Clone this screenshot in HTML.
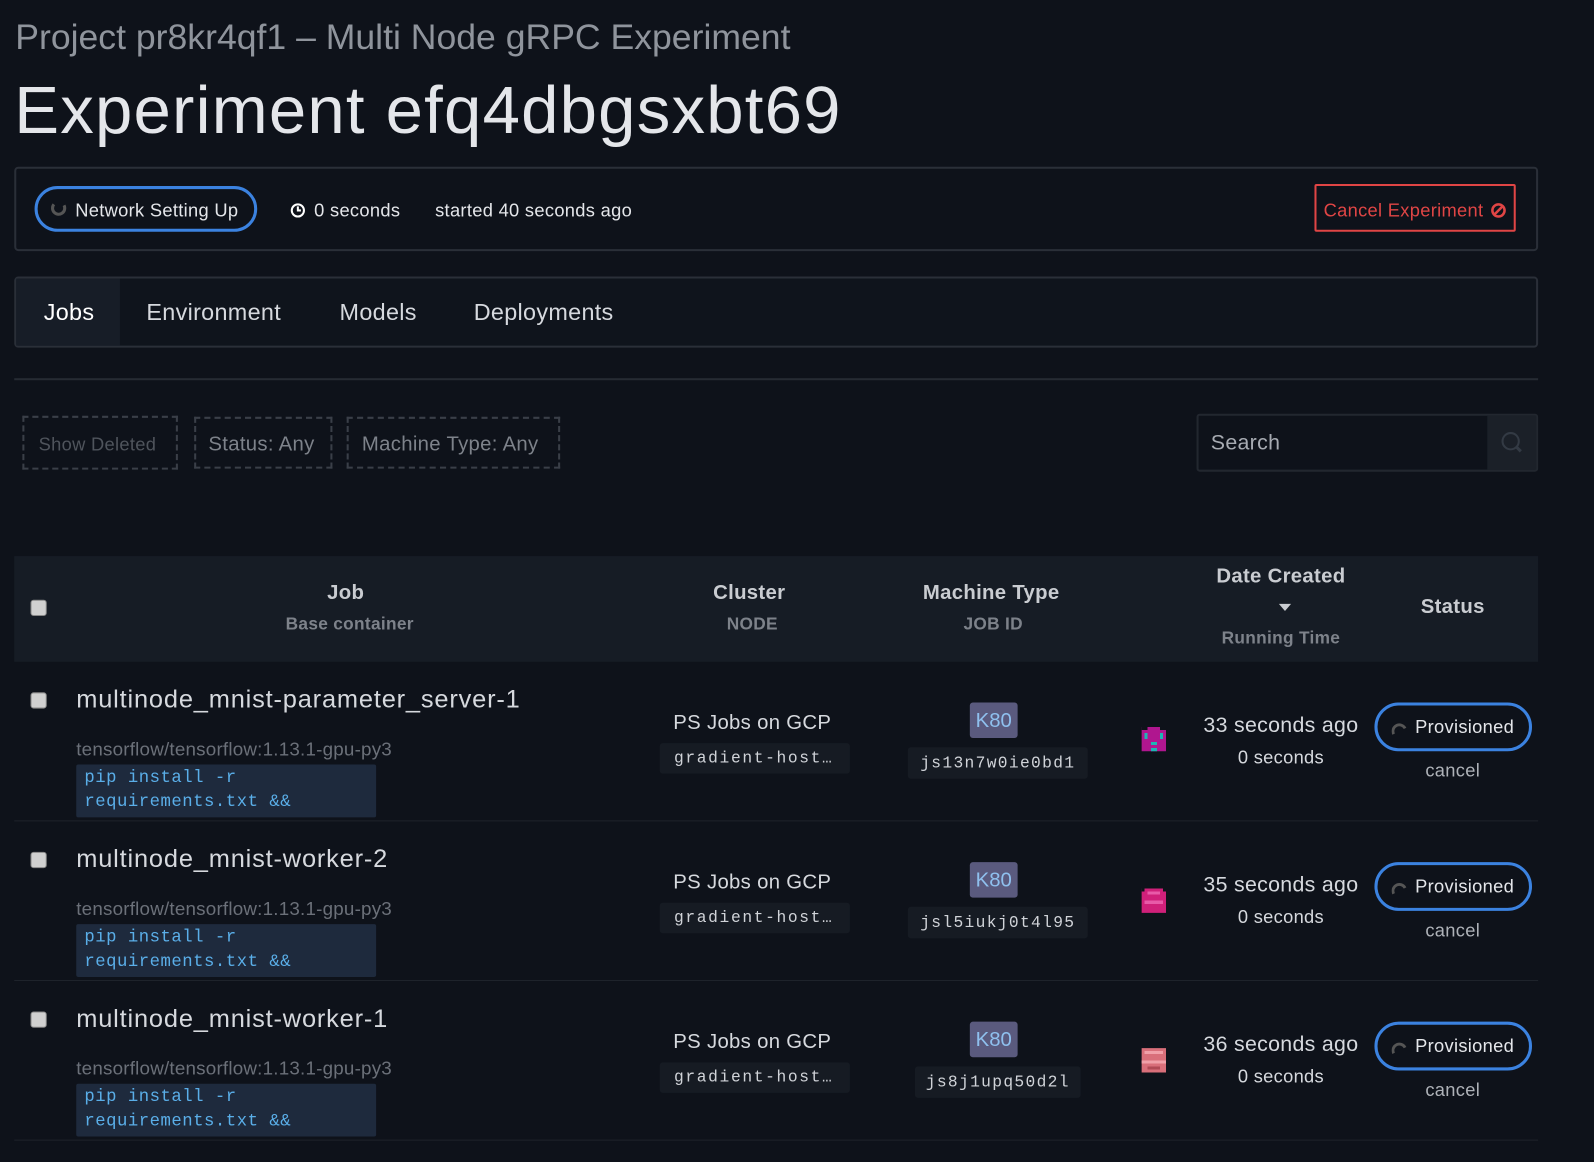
<!DOCTYPE html>
<html><head><meta charset="utf-8"><style>
*{box-sizing:border-box;margin:0;padding:0}
html,body{width:1594px;height:1162px;background:#0e121a;overflow:hidden}
#w{position:absolute;left:0;top:0;width:1568px;height:1143px;transform:scale(1.0166);transform-origin:0 0;font-family:"Liberation Sans",sans-serif;color:#d6d9de;letter-spacing:0.3px}
.a{position:absolute;white-space:nowrap}
.mono{font-family:"Liberation Mono",monospace;letter-spacing:0}
.pill{border:3px solid #3b82e0;border-radius:24px}
.cb{width:16px;height:16px;background:#d0d0d0;border-radius:3px;border:1px solid #888}
.c{text-align:center}
.row{position:absolute;left:0;width:1568px;height:158px}
.name{left:75px;top:23px;font-size:25px;color:#d6d9de;letter-spacing:0.8px}
.img{left:75px;top:75px;font-size:18.5px;color:#6b7079;letter-spacing:0.2px}
.code{left:75px;top:101px;width:295px;height:52px;background:#1e2a3d;border-radius:2px;color:#5aaee8;font-size:17px;line-height:24px;padding:2px 0 0 8px;white-space:pre;overflow:hidden;letter-spacing:0.5px}
.cl{left:640px;top:49px;width:200px;font-size:20px;color:#d6d9de}
.node{left:649px;top:80px;width:187px;height:30px;background:#161b23;border-radius:3px;font-size:16px;color:#d0d3d8;padding:6px 0 0 14px;letter-spacing:1.6px}
.k80{left:954px;top:40px;width:47px;height:35px;background:#5a5a7e;border-radius:3px;color:#8fc0ee;font-size:20px;text-align:center;padding-top:7px;letter-spacing:0}
.jid{left:893px;top:84px;width:177px;height:31px;background:#161b23;border-radius:3px;font-size:16px;color:#d0d3d8;text-align:center;padding-top:7px;letter-spacing:1.3px}
.dt{left:1160px;top:51px;width:200px;font-size:21px;color:#d6d9de}
.rt{left:1160px;top:84px;width:200px;font-size:18px;color:#d6d9de}
.st{left:1352px;top:40px;width:155px;height:48px}
.stt{left:1392px;top:54px;font-size:18px;color:#e4e6ea}
.can{left:1329px;top:97px;width:200px;font-size:18px;color:#aeb2b8}
.sep{left:14px;top:156px;width:1499px;height:1px;background:#1e232b}
</style></head><body><div id="w">
<div class="a" style="left:15px;top:17px;font-size:35px;color:#8f949c;letter-spacing:0">Project pr8kr4qf1 – Multi Node gRPC Experiment</div>
<div class="a" style="left:14px;top:70px;font-size:66px;color:#e4e6ea;letter-spacing:1.2px">Experiment efq4dbgsxbt69</div>

<div class="a" style="left:14px;top:164px;width:1499px;height:83px;border:2px solid #2a2f38;border-radius:4px"></div>
<div class="a pill" style="left:34px;top:183px;width:219px;height:45px"></div>
<svg class="a" style="left:50px;top:198px" width="16" height="16" viewBox="0 0 16 16"><path d="M3 3 A6 6 0 1 0 13 4" fill="none" stroke="#555" stroke-width="3"/></svg>
<div class="a" style="left:74px;top:197px;font-size:18px;color:#e4e6ea">Network Setting Up</div>
<svg class="a" style="left:285px;top:199px" width="16" height="16" viewBox="0 0 16 16"><circle cx="8" cy="8" r="6" fill="none" stroke="#fff" stroke-width="2"/><path d="M8 4v4h3" stroke="#fff" stroke-width="2" fill="none"/></svg>
<div class="a" style="left:309px;top:197px;font-size:18px;color:#e4e6ea">0 seconds</div>
<div class="a" style="left:428px;top:197px;font-size:18px;color:#e4e6ea">started 40 seconds ago</div>
<div class="a" style="left:1293px;top:181px;width:198px;height:47px;border:2px solid #e04545;border-radius:2px"></div>
<div class="a" style="left:1302px;top:197px;font-size:18px;color:#e04545">Cancel Experiment</div>
<svg class="a" style="left:1466px;top:199px" width="16" height="16" viewBox="0 0 16 16"><circle cx="8" cy="8" r="6" fill="none" stroke="#e04545" stroke-width="2.5"/><path d="M4 12L12 4" stroke="#e04545" stroke-width="2.5"/></svg>

<div class="a" style="left:14px;top:272px;width:1499px;height:70px;border:2px solid #2a2f38;border-radius:4px;background:#0f141c"></div>
<div class="a" style="left:16px;top:274px;width:102px;height:66px;background:#171d27"></div>
<div class="a" style="left:43px;top:294px;font-size:23px;color:#fff">Jobs</div>
<div class="a" style="left:144px;top:294px;font-size:23px;color:#d6d9de">Environment</div>
<div class="a" style="left:334px;top:294px;font-size:23px;color:#d6d9de">Models</div>
<div class="a" style="left:466px;top:294px;font-size:23px;color:#d6d9de">Deployments</div>
<div class="a" style="left:14px;top:372px;width:1499px;height:2px;background:#262b33"></div>

<div class="a" style="left:22px;top:409px;width:153px;height:53px;border:2px dashed #3a3f48;font-size:18px;color:#4f545c;padding:16px 0 0 14px">Show Deleted</div>
<div class="a" style="left:191px;top:410px;width:136px;height:51px;border:2px dashed #3a3f48;font-size:20px;color:#7d828a;padding:14px 0 0 12px">Status: Any</div>
<div class="a" style="left:341px;top:410px;width:210px;height:51px;border:2px dashed #3a3f48;font-size:20px;color:#7d828a;padding:14px 0 0 13px">Machine Type: Any</div>
<div class="a" style="left:1177px;top:407px;width:336px;height:57px;border:2px solid #22272f;border-radius:3px"></div>
<div class="a" style="left:1463px;top:409px;width:48px;height:53px;background:#1b2028"></div>
<div class="a" style="left:1191px;top:424px;font-size:21px;color:#a7abb2">Search</div>
<svg class="a" style="left:1476px;top:424px" width="24" height="24" viewBox="0 0 24 24"><circle cx="10" cy="10" r="8" fill="none" stroke="#333a44" stroke-width="2"/><path d="M16 16l4 4" stroke="#333a44" stroke-width="3"/></svg>

<div class="a" style="left:14px;top:547px;width:1499px;height:104px;background:#161c25"></div>
<div class="a cb" style="left:30px;top:590px"></div>
<div class="a c" style="left:240px;top:572px;width:200px;font-size:20px;font-weight:bold;color:#c9ccd1">Job</div>
<div class="a c" style="left:244px;top:604px;width:200px;font-size:17px;font-weight:bold;color:#7d828a">Base container</div>
<div class="a c" style="left:637px;top:572px;width:200px;font-size:20px;font-weight:bold;color:#c9ccd1">Cluster</div>
<div class="a c" style="left:640px;top:604px;width:200px;font-size:17px;font-weight:bold;color:#7d828a">NODE</div>
<div class="a c" style="left:875px;top:572px;width:200px;font-size:20px;font-weight:bold;color:#c9ccd1">Machine Type</div>
<div class="a c" style="left:877px;top:604px;width:200px;font-size:17px;font-weight:bold;color:#7d828a">JOB ID</div>
<div class="a c" style="left:1160px;top:556px;width:200px;font-size:20px;font-weight:bold;color:#c9ccd1">Date Created</div>
<div class="a" style="left:1258px;top:594px;border-left:6px solid transparent;border-right:6px solid transparent;border-top:7px solid #c9ccd1"></div>
<div class="a c" style="left:1160px;top:618px;width:200px;font-size:17px;font-weight:bold;color:#7d828a">Running Time</div>
<div class="a c" style="left:1329px;top:586px;width:200px;font-size:20px;font-weight:bold;color:#c9ccd1">Status</div>

<div class="row" style="top:651px">
<div class="a cb" style="left:30px;top:30px"></div>
<div class="a name">multinode_mnist-parameter_server-1</div>
<div class="a img">tensorflow/tensorflow:1.13.1-gpu-py3</div>
<div class="a code mono">pip install -r
requirements.txt &amp;&amp;</div>
<div class="a c cl">PS Jobs on GCP</div>
<div class="a node mono">gradient-host…</div>
<div class="a k80">K80</div>
<div class="a jid mono">js13n7w0ie0bd1</div>
<svg class="a" style="left:1123px;top:64px" width="24" height="24" viewBox="0 0 8 8" shape-rendering="crispEdges"><rect width="8" height="8" fill="#b0168f"/><rect x="0" y="0" width="2" height="1" fill="#0e121a"/><rect x="6" y="0" width="2" height="1" fill="#0e121a"/><rect x="1" y="2" width="1" height="2" fill="#1fb5b5"/><rect x="6" y="2" width="1" height="2" fill="#1fb5b5"/><rect x="3" y="5" width="2" height="1" fill="#1fb5b5"/><rect x="3" y="7" width="2" height="1" fill="#1fb5b5"/></svg>
<div class="a c dt">33 seconds ago</div>
<div class="a c rt">0 seconds</div>
<div class="a pill st"></div>
<svg class="a" style="left:1369px;top:58px" width="15" height="15" viewBox="0 0 16 16"><path d="M2 14 A6 6 0 1 1 14 8" fill="none" stroke="#555" stroke-width="3"/></svg>
<div class="a stt">Provisioned</div>
<div class="a c can">cancel</div>
<div class="a sep"></div>
</div>

<div class="row" style="top:808px">
<div class="a cb" style="left:30px;top:30px"></div>
<div class="a name">multinode_mnist-worker-2</div>
<div class="a img">tensorflow/tensorflow:1.13.1-gpu-py3</div>
<div class="a code mono">pip install -r
requirements.txt &amp;&amp;</div>
<div class="a c cl">PS Jobs on GCP</div>
<div class="a node mono">gradient-host…</div>
<div class="a k80">K80</div>
<div class="a jid mono">jsl5iukj0t4l95</div>
<svg class="a" style="left:1123px;top:66px" width="24" height="24" viewBox="0 0 8 8" shape-rendering="crispEdges"><rect width="8" height="8" fill="#d0207a"/><rect x="2" y="1" width="4" height="1" fill="#e85aa8"/><rect x="1" y="4" width="6" height="1" fill="#e85aa8"/><rect x="0" y="0" width="1" height="1" fill="#0e121a"/><rect x="7" y="0" width="1" height="1" fill="#0e121a"/></svg>
<div class="a c dt">35 seconds ago</div>
<div class="a c rt">0 seconds</div>
<div class="a pill st"></div>
<svg class="a" style="left:1369px;top:58px" width="15" height="15" viewBox="0 0 16 16"><path d="M2 14 A6 6 0 1 1 14 8" fill="none" stroke="#555" stroke-width="3"/></svg>
<div class="a stt">Provisioned</div>
<div class="a c can">cancel</div>
<div class="a sep"></div>
</div>

<div class="row" style="top:965px">
<div class="a cb" style="left:30px;top:30px"></div>
<div class="a name">multinode_mnist-worker-1</div>
<div class="a img">tensorflow/tensorflow:1.13.1-gpu-py3</div>
<div class="a code mono">pip install -r
requirements.txt &amp;&amp;</div>
<div class="a c cl">PS Jobs on GCP</div>
<div class="a node mono">gradient-host…</div>
<div class="a k80">K80</div>
<div class="a jid mono" style="left:900px;width:163px">js8j1upq50d2l</div>
<svg class="a" style="left:1123px;top:66px" width="24" height="24" viewBox="0 0 8 8" shape-rendering="crispEdges"><rect width="8" height="8" fill="#d96f7a"/><rect x="1" y="1" width="6" height="1" fill="#f0a0a8"/><rect x="0" y="4" width="8" height="1" fill="#f0a0a8"/><rect x="2" y="6" width="4" height="1" fill="#b04a55"/></svg>
<div class="a c dt">36 seconds ago</div>
<div class="a c rt">0 seconds</div>
<div class="a pill st"></div>
<svg class="a" style="left:1369px;top:58px" width="15" height="15" viewBox="0 0 16 16"><path d="M2 14 A6 6 0 1 1 14 8" fill="none" stroke="#555" stroke-width="3"/></svg>
<div class="a stt">Provisioned</div>
<div class="a c can">cancel</div>
<div class="a sep"></div>
</div>
</div></body></html>
